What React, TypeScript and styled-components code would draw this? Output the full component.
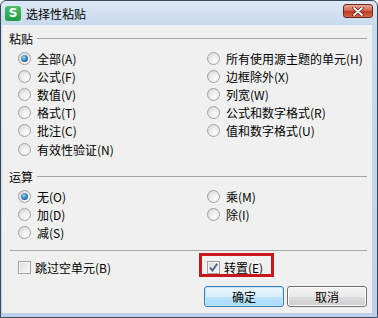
import styled, { createGlobalStyle, css } from 'styled-components';

const GlobalStyle = createGlobalStyle`
  html, body {
    margin: 0;
    padding: 0;
  }
  body {
    width: 378px;
    height: 318px;
    overflow: hidden;
    background: #ffffff;
    font-family: "Noto Sans CJK SC", "Noto Sans", sans-serif;
    font-size: 12px;
    color: #000;
  }
`;

type Choice = { label: string; key: string; checked?: boolean };

const pasteOptions: Choice[] = [
    { label: '全部', key: 'A', checked: true },
    { label: '所有使用源主题的单元', key: 'H' },
    { label: '公式', key: 'F' },
    { label: '边框除外', key: 'X' },
    { label: '数值', key: 'V' },
    { label: '列宽', key: 'W' },
    { label: '格式', key: 'T' },
    { label: '公式和数字格式', key: 'R' },
    { label: '批注', key: 'C' },
    { label: '值和数字格式', key: 'U' },
    { label: '有效性验证', key: 'N' },
];

const operationOptions: Choice[] = [
    { label: '无', key: 'O', checked: true },
    { label: '乘', key: 'M' },
    { label: '加', key: 'D' },
    { label: '除', key: 'I' },
    { label: '减', key: 'S' },
];

const CheckMark = () => (
    <svg width="11" height="11" viewBox="0 0 11 11">
        <path d="M2 5.5 L4.5 8.5 L9.2 1.8" fill="none" stroke="#4a5d86" strokeWidth="1.8" />
    </svg>
);

const CloseGlyph = () => (
    <svg width="12" height="9" viewBox="0 0 12 9">
        <path d="M2 1 L10 8 M10 1 L2 8" stroke="#5a1a12" strokeWidth="3.2" strokeLinecap="round" />
        <path d="M2 1 L10 8 M10 1 L2 8" stroke="#ffffff" strokeWidth="1.8" strokeLinecap="round" />
    </svg>
);

const App = () => {
    return (
        <>
            <GlobalStyle />
            <Window>
                <TitleBar>
                    <AppIcon>S</AppIcon>
                    <Title>选择性粘贴</Title>
                    <CloseButton><CloseGlyph /></CloseButton>
                </TitleBar>
                <Client>
                    <GroupHeader>粘贴</GroupHeader>
                    <OptionGrid $rows="repeat(5, 18px) 19px">
                        {pasteOptions.map((o) => (
                            <Option key={o.key}>
                                <Radio $checked={o.checked} />
                                <span>{o.label}({o.key})</span>
                            </Option>
                        ))}
                    </OptionGrid>
                    <GroupHeader $gap={9}>运算</GroupHeader>
                    <OptionGrid $rows="repeat(3, 18px)">
                        {operationOptions.map((o) => (
                            <Option key={o.key}>
                                <Radio $checked={o.checked} />
                                <span>{o.label}({o.key})</span>
                            </Option>
                        ))}
                    </OptionGrid>
                    <Separator />
                    <CheckRow>
                        <CheckOption>
                            <CheckBox />
                            <span>跳过空单元(B)</span>
                        </CheckOption>
                        <CheckOption $highlight>
                            <CheckBox><CheckMark /></CheckBox>
                            <span>转置(E)</span>
                        </CheckOption>
                    </CheckRow>
                    <ButtonRow>
                        <DialogButton $default>确定</DialogButton>
                        <DialogButton>取消</DialogButton>
                    </ButtonRow>
                </Client>
            </Window>
        </>
    );
};

const Window = styled.div`
    width: 378px;
    height: 318px;
    box-sizing: border-box;
    border: 1px solid #3a4a5c;
    border-radius: 6px 6px 0 0;
    background: linear-gradient(#dde9f5, #c8daee 24px, #bdd2ea);
    padding: 0 5px 4px 1px;
    display: flex;
    flex-direction: column;
`;

const TitleBar = styled.div`
    height: 24px;
    display: flex;
    align-items: center;
    padding-left: 3px;
`;

const AppIcon = styled.span`
    width: 16px;
    height: 15px;
    border-radius: 3px;
    background: linear-gradient(#4cc06a, #1f9b43);
    color: #fff;
    font-family: "DejaVu Sans", sans-serif;
    font-weight: bold;
    font-size: 12px;
    line-height: 15px;
    text-align: center;
    margin-right: 5px;
`;

const Title = styled.span`
    font-size: 12px;
    color: #000;
`;

const CloseButton = styled.div`
    margin-left: auto;
    margin-right: -1px;
    align-self: flex-start;
    margin-top: 3px;
    width: 30px;
    height: 14px;
    box-sizing: border-box;
    border: 1px solid #6e2a22;
    border-radius: 3px;
    background: linear-gradient(#e8a593, #d46a55 45%, #c23a22 55%, #d1684c);
    display: flex;
    align-items: center;
    justify-content: center;
`;

const Client = styled.div`
    flex: 1;
    background: #f0f0f0;
    display: flex;
    flex-direction: column;
    padding: 4px 5px 0 0;
`;

const GroupHeader = styled.div<{ $gap?: number }>`
    height: 18px;
    display: flex;
    align-items: center;
    gap: 4px;
    padding-left: 7px;
    margin-top: ${(p) => p.$gap ?? 0}px;
    &::after {
        content: '';
        flex: 1;
        border-top: 1px solid #a5a5a5;
        margin-top: 1px;
    }
`;

const OptionGrid = styled.div<{ $rows: string }>`
    display: grid;
    grid-template-columns: 189px 1fr;
    grid-template-rows: ${(p) => p.$rows};
    align-items: end;
    padding-left: 16px;
    margin-top: 2px;
`;

const Option = styled.label`
    height: 18px;
    display: flex;
    align-items: center;
    gap: 6px;
    white-space: nowrap;
`;

const Radio = styled.span<{ $checked?: boolean }>`
    width: 13px;
    height: 13px;
    box-sizing: border-box;
    border-radius: 50%;
    border: 1px solid #a2a2a2;
    background: radial-gradient(circle at 65% 70%, #ffffff, #ececec 45%, #d2d2d2);
    display: flex;
    align-items: center;
    justify-content: center;
    flex-shrink: 0;
    ${(p) =>
        p.$checked &&
        css`
            &::after {
                content: '';
                width: 7px;
                height: 7px;
                border-radius: 50%;
                background: radial-gradient(circle at 40% 35%, #9ad6f6, #2f78b8 55%, #16456f);
            }
        `}
`;

const Separator = styled.div`
    margin: 9px 0 0 8px;
    border-top: 1px solid #a5a5a5;
`;

const CheckRow = styled.div`
    display: grid;
    grid-template-columns: 189px 1fr;
    padding-left: 16px;
    margin-top: 7px;
`;

const CheckOption = styled.label<{ $highlight?: boolean }>`
    height: 18px;
    display: flex;
    align-items: center;
    gap: 4px;
    justify-self: start;
    white-space: nowrap;
    ${(p) =>
        p.$highlight &&
        css`
            position: relative;
            &::after {
                content: '';
                position: absolute;
                left: -8px;
                top: -5px;
                width: 75px;
                height: 24px;
                box-sizing: border-box;
                border: 3px solid #c8161d;
            }
        `}
`;

const CheckBox = styled.span`
    width: 13px;
    height: 13px;
    box-sizing: border-box;
    border: 1px solid #a2a2a2;
    background: linear-gradient(135deg, #dcdcdc, #f8f8f8);
    box-shadow: inset 0 0 0 1px #f4f4f4;
    display: flex;
    align-items: center;
    justify-content: center;
    flex-shrink: 0;
`;

const ButtonRow = styled.div`
    display: flex;
    justify-content: flex-end;
    gap: 3px;
    margin-top: 10px;
`;

const DialogButton = styled.button<{ $default?: boolean }>`
    width: 80px;
    height: 21px;
    box-sizing: border-box;
    padding: 0;
    font-family: "Noto Sans CJK SC", "Noto Sans", sans-serif;
    font-size: 12px;
    color: #000;
    border: 1px solid #707070;
    border-radius: 3px;
    background: linear-gradient(#f3f3f3, #ebebeb 50%, #dddddd 50%, #cfcfcf);
    box-shadow: inset 0 0 0 1px #fcfcfc;
    ${(p) =>
        p.$default &&
        css`
            border-color: #3c7fb1;
            background: linear-gradient(#eaf6fd, #d9f0fc 50%, #bee6fd 50%, #a7d9f5);
            box-shadow: inset 0 0 0 1px #c3e7fa;
        `}
`;

export default App;
